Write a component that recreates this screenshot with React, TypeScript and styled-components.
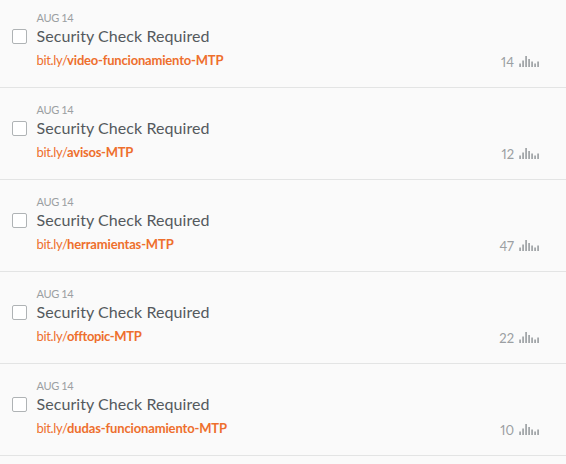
import React from "react";
import styled, { createGlobalStyle } from "styled-components";

const GlobalStyle = createGlobalStyle`
  html, body { margin: 0; background: #fafafa; }
  body { overflow: hidden; font-family: Lato, "Open Sans", sans-serif; }
  * { box-sizing: border-box; }
`;

const List = styled.ul`
  margin: -4px 0 0;
  padding: 0;
  list-style: none;
  height: 468px;
  overflow: hidden;
`;

const Row = styled.li`
  display: flex;
  align-items: flex-start;
  height: 92px;
  padding: 14px 26px 0 12px;
  border-bottom: 1px solid #e3e4e4;
`;

const Checkbox = styled.input`
  appearance: none;
  flex: none;
  width: 15px;
  height: 15px;
  margin: 19px 9.6px 0 0;
  border: 1px solid #afb3b5;
  border-radius: 2px;
  background: #fff;
`;

const Details = styled.div`
  flex: 1;
  min-width: 0;
  white-space: nowrap;
`;

const DateLabel = styled.div`
  font-size: 11px;
  line-height: 16px;
  letter-spacing: -0.4px;
  color: #9b9fa2;
`;

const Title = styled.div`
  font-size: 16px;
  line-height: 20px;
  letter-spacing: 0.06px;
  color: #54595d;
`;

const Link = styled.a`
  display: flex;
  margin-top: 5px;
  font-size: 13px;
  line-height: 18px;
  color: #ee6f2d;
  text-decoration: none;
`;

const Domain = styled.span`
  width: 30.5px;
  letter-spacing: -0.35px;
`;

const Slug = styled.span<{ $tracking: number }>`
  font-weight: 700;
  letter-spacing: ${(p) => p.$tracking}px;
`;

const Clicks = styled.div`
  display: flex;
  align-items: flex-end;
  margin-top: 43px;
  font-size: 13px;
  line-height: 18px;
  font-variant-numeric: proportional-nums;
  color: #9b9fa2;
`;

const Bars = styled.svg`
  display: block;
  width: 21px;
  height: 12px;
  margin: 0 0 4px 5px;
  fill: #a3a7aa;
`;

const barHeights = [3.5, 6.5, 11, 8, 5.5, 3.5, 5.5];

const links = [
  { slug: "video-funcionamiento-MTP", clicks: 14, tracking: -0.19 },
  { slug: "avisos-MTP", clicks: 12, tracking: -0.25 },
  { slug: "herramientas-MTP", clicks: 47, tracking: -0.16 },
  { slug: "offtopic-MTP", clicks: 22, tracking: -0.38 },
  { slug: "dudas-funcionamiento-MTP", clicks: 10, tracking: -0.14 },
];

export default function App() {
  return (
    <>
      <GlobalStyle />
      <List>
        {links.map((link) => (
          <Row key={link.slug}>
            <Checkbox type="checkbox" aria-label={link.slug} />
            <Details>
              <DateLabel>AUG 14</DateLabel>
              <Title>Security Check Required</Title>
              <Link>
                <Domain>bit.ly/</Domain>
                <Slug $tracking={link.tracking}>{link.slug}</Slug>
              </Link>
            </Details>
            <Clicks>
              {link.clicks}
              <Bars viewBox="0 0 21 12" aria-hidden="true">
                {barHeights.map((h, i) => (
                  <rect key={i} x={i * 3 + 0.2} y={12 - h} width="1.8" height={h} />
                ))}
              </Bars>
            </Clicks>
          </Row>
        ))}
      </List>
    </>
  );
}
